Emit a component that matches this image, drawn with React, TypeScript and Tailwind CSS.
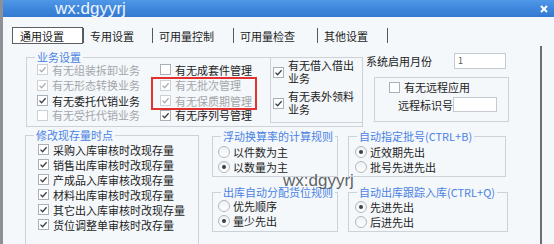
import type { ReactNode } from "react";

const bg = "bg-[#f5f8fb]";

interface CheckProps {
  label: ReactNode;
  checked?: boolean;
  disabled?: boolean;
  className?: string;
  labelClassName?: string;
}

const Check = ({ label, checked = false, disabled = false, className = "", labelClassName = "" }: CheckProps) => (
  <div className={`flex items-center gap-[4px] ${className}`}>
    <span
      className={`flex h-[11px] w-[11px] shrink-0 items-center justify-center border bg-white ${
        disabled ? "border-[#cdd1d6]" : "border-[#aab0b7]"
      }`}
    >
      {checked ? (
        <svg width="9" height="9" viewBox="0 0 9 9">
          <path
            d="M1.5 4.6 L3.6 6.7 L7.6 2.2"
            fill="none"
            stroke={disabled ? "#a9adb2" : "#3a3d42"}
            strokeWidth="1.3"
          />
        </svg>
      ) : null}
    </span>
    <span className={`${disabled ? "text-[#a3a6aa]" : "text-[#1c1c1c]"} ${labelClassName}`}>{label}</span>
  </div>
);

const Radio = ({ label, checked = false }: { label: string; checked?: boolean }) => (
  <div className="flex h-[15px] items-center gap-[3px]">
    <span className="flex h-[12px] w-[12px] shrink-0 items-center justify-center rounded-full border border-[#b3b8be] bg-[linear-gradient(180deg,#eef0f3_0%,#ffffff_100%)]">
      {checked ? <span className="h-[4px] w-[4px] rounded-full bg-[#3c3f44]" /> : null}
    </span>
    <span className="text-[#1c1c1c]">{label}</span>
  </div>
);

interface GroupProps {
  title: string;
  className?: string;
  children: ReactNode;
}

const Group = ({ title, className = "", children }: GroupProps) => (
  <div className={`relative border border-[#cdd2d8] ${className}`}>
    <span className={`absolute left-[8px] top-[-7px] whitespace-nowrap px-[2px] leading-[13px] text-[#4a82e2] ${bg}`}>
      {title}
    </span>
    {children}
  </div>
);

const tabs = [
  { label: "专用设置", w: "w-[69px]" },
  { label: "可用量控制", w: "w-[81px]" },
  { label: "可用量检查", w: "w-[84px]" },
  { label: "其他设置", w: "w-[70px]" }
];

const col1 = [
  { label: "有无组装拆卸业务", checked: true, disabled: true, h: "h-[15px]" },
  { label: "有无形态转换业务", checked: true, disabled: true, h: "h-[16px]" },
  { label: "有无委托代销业务", checked: true, disabled: false, h: "h-[15px]" },
  { label: "有无受托代销业务", checked: false, disabled: true, h: "h-[14px]" }
];

const col2 = [
  { label: "有无成套件管理", checked: false, disabled: false, h: "h-[15px]" },
  { label: "有无批次管理", checked: true, disabled: true, h: "h-[16px]" },
  { label: "有无保质期管理", checked: true, disabled: true, h: "h-[15px]" },
  { label: "有无序列号管理", checked: true, disabled: false, h: "h-[14px]" }
];

const stockPoints = [
  "采购入库审核时改现存量",
  "销售出库审核时改现存量",
  "产成品入库审核改现存量",
  "材料出库审核时改现存量",
  "其它出入库审核时改现存量",
  "货位调整单审核时改存量"
];

export default function App() {
  return (
    <div
      className={`relative flex h-[244px] w-[554px] overflow-hidden text-[11px] leading-[14px] font-['Noto_Sans_CJK_SC','Noto_Sans',sans-serif] ${bg}`}
    >
      <div className="w-[3px] shrink-0 bg-[#8d9096]" />

      <div className="flex min-w-0 flex-1 flex-col">
        <div className="flex h-[23px] items-center justify-between bg-[linear-gradient(180deg,#4f97e7_0%,#3c84da_60%,#3479d1_100%)] pl-[52px] pr-[6px]">
          <span className="font-['Liberation_Sans',sans-serif] text-[17px] leading-none text-[#eef5ff]">wx:dgyyrj</span>
          <svg width="8" height="8" viewBox="0 0 8 8">
            <path d="M1 1 L7 7 M7 1 L1 7" stroke="#ffffff" strokeWidth="2" />
          </svg>
        </div>

        <div className="mt-[10px] flex h-[17px] items-center pl-[9px] text-[#1c1c1c]">
          <div className="flex h-[17px] w-[71px] items-center border border-[#5c5f63] bg-white pl-[7px]">通用设置</div>
          <span className="h-[15px] w-[1px] bg-[#55585c]" />
          {tabs.map((tab) => (
            <div key={tab.label} className={`flex items-center justify-between ${tab.w}`}>
              <span className="pl-[6px]">{tab.label}</span>
              <span className="h-[15px] w-[1px] bg-[#55585c]" />
            </div>
          ))}
        </div>

        <div className="flex flex-1">
          <div className="flex w-[537px] flex-col">
            <div className="flex items-start">
              <Group title="业务设置" className="ml-[23px] mt-[13px] flex h-[70px] w-[337px] items-start">
                <div className="flex w-[133px] flex-col pl-[10px] pt-[4px]">
                  {col1.map((item) => (
                    <Check
                      key={item.label}
                      label={item.label}
                      checked={item.checked}
                      disabled={item.disabled}
                      className={item.h}
                    />
                  ))}
                </div>
                <div className="flex w-[110px] flex-col pt-[4px]">
                  {col2.map((item) => (
                    <Check
                      key={item.label}
                      label={item.label}
                      checked={item.checked}
                      disabled={item.disabled}
                      className={item.h}
                    />
                  ))}
                </div>
                <div className="flex h-[65px] flex-1 flex-col gap-[5px] border-b border-l border-[#cdd2d8] pl-[2px] pt-[1px]">
                  <Check
                    checked
                    labelClassName="block w-[68px] leading-[13px]"
                    label={
                      <>
                        有无借入借出
                        <br />
                        业务
                      </>
                    }
                  />
                  <Check
                    checked
                    labelClassName="block w-[68px] leading-[13px]"
                    label={
                      <>
                        有无表外领料
                        <br />
                        业务
                      </>
                    }
                  />
                </div>
                <div className="pointer-events-none absolute left-[124px] top-[19px] h-[33px] w-[106px] border-2 border-[#e2322f]" />
              </Group>

              <div className="ml-[3px] mt-[9px] flex flex-col">
                <div className="flex h-[16px] items-center">
                  <span className="w-[88px] text-[#1c1c1c]">系统启用月份</span>
                  <div className="flex h-[16px] w-[52px] items-center border border-[#c6cbd1] bg-white pl-[3px] text-[9px] text-[#555]">
                    1
                  </div>
                </div>
                <div className="ml-[8px] mt-[8px] h-[45px] w-[135px] border border-[#cdd2d8] pt-[2px]">
                  <Check label="有无远程应用" className="h-[14px] pl-[14px]" />
                  <div className="mt-[3px] flex h-[15px] items-center pl-[23px]">
                    <span className="w-[55px] text-[#1c1c1c]">远程标识号</span>
                    <div className="h-[15px] w-[44px] border border-[#c6cbd1] bg-white" />
                  </div>
                </div>
              </div>
            </div>

            <div className="flex items-start">
              <Group title="修改现存量时点" className="ml-[22px] mt-[8px] h-[110px] w-[174px]">
                <div className="flex flex-col pl-[12px] pt-[6px]">
                  {stockPoints.map((label) => (
                    <Check key={label} checked label={label} className="h-[15px]" />
                  ))}
                </div>
              </Group>

              <div className="ml-[13px] flex w-[126px] flex-col">
                <Group title="浮动换算率的计算规则" className="mt-[9px] h-[41px]">
                  <div className="flex flex-col pl-[5px] pt-[7px]">
                    <Radio label="以件数为主" />
                    <Radio label="以数量为主" checked />
                  </div>
                </Group>
                <Group title="出库自动分配货位规则" className="mt-[15px] h-[40px]">
                  <div className="flex flex-col pl-[5px] pt-[5px]">
                    <Radio label="优先顺序" />
                    <Radio label="量少先出" checked />
                  </div>
                </Group>
              </div>

              <div className="ml-[10px] flex w-[160px] flex-col">
                <Group title="自动指定批号(CTRL+B)" className="mt-[9px] h-[41px] w-[158px]">
                  <div className="flex flex-col pl-[6px] pt-[7px]">
                    <Radio label="近效期先出" checked />
                    <Radio label="批号先进先出" />
                  </div>
                </Group>
                <Group title="自动出库跟踪入库(CTRL+Q)" className="mt-[15px] h-[40px] w-[160px]">
                  <div className="flex flex-col pl-[6px] pt-[6px]">
                    <Radio label="先进先出" checked />
                    <Radio label="后进先出" />
                  </div>
                </Group>
              </div>
            </div>
          </div>

          <div className="mt-[2px] w-[2px] bg-[#6b6e73]" />
        </div>
      </div>

      <span className="pointer-events-none absolute left-[283px] top-[172px] font-['Liberation_Sans',sans-serif] text-[17px] leading-none text-[#4d4f52]/90">
        wx:dgyyrj
      </span>
    </div>
  );
}
